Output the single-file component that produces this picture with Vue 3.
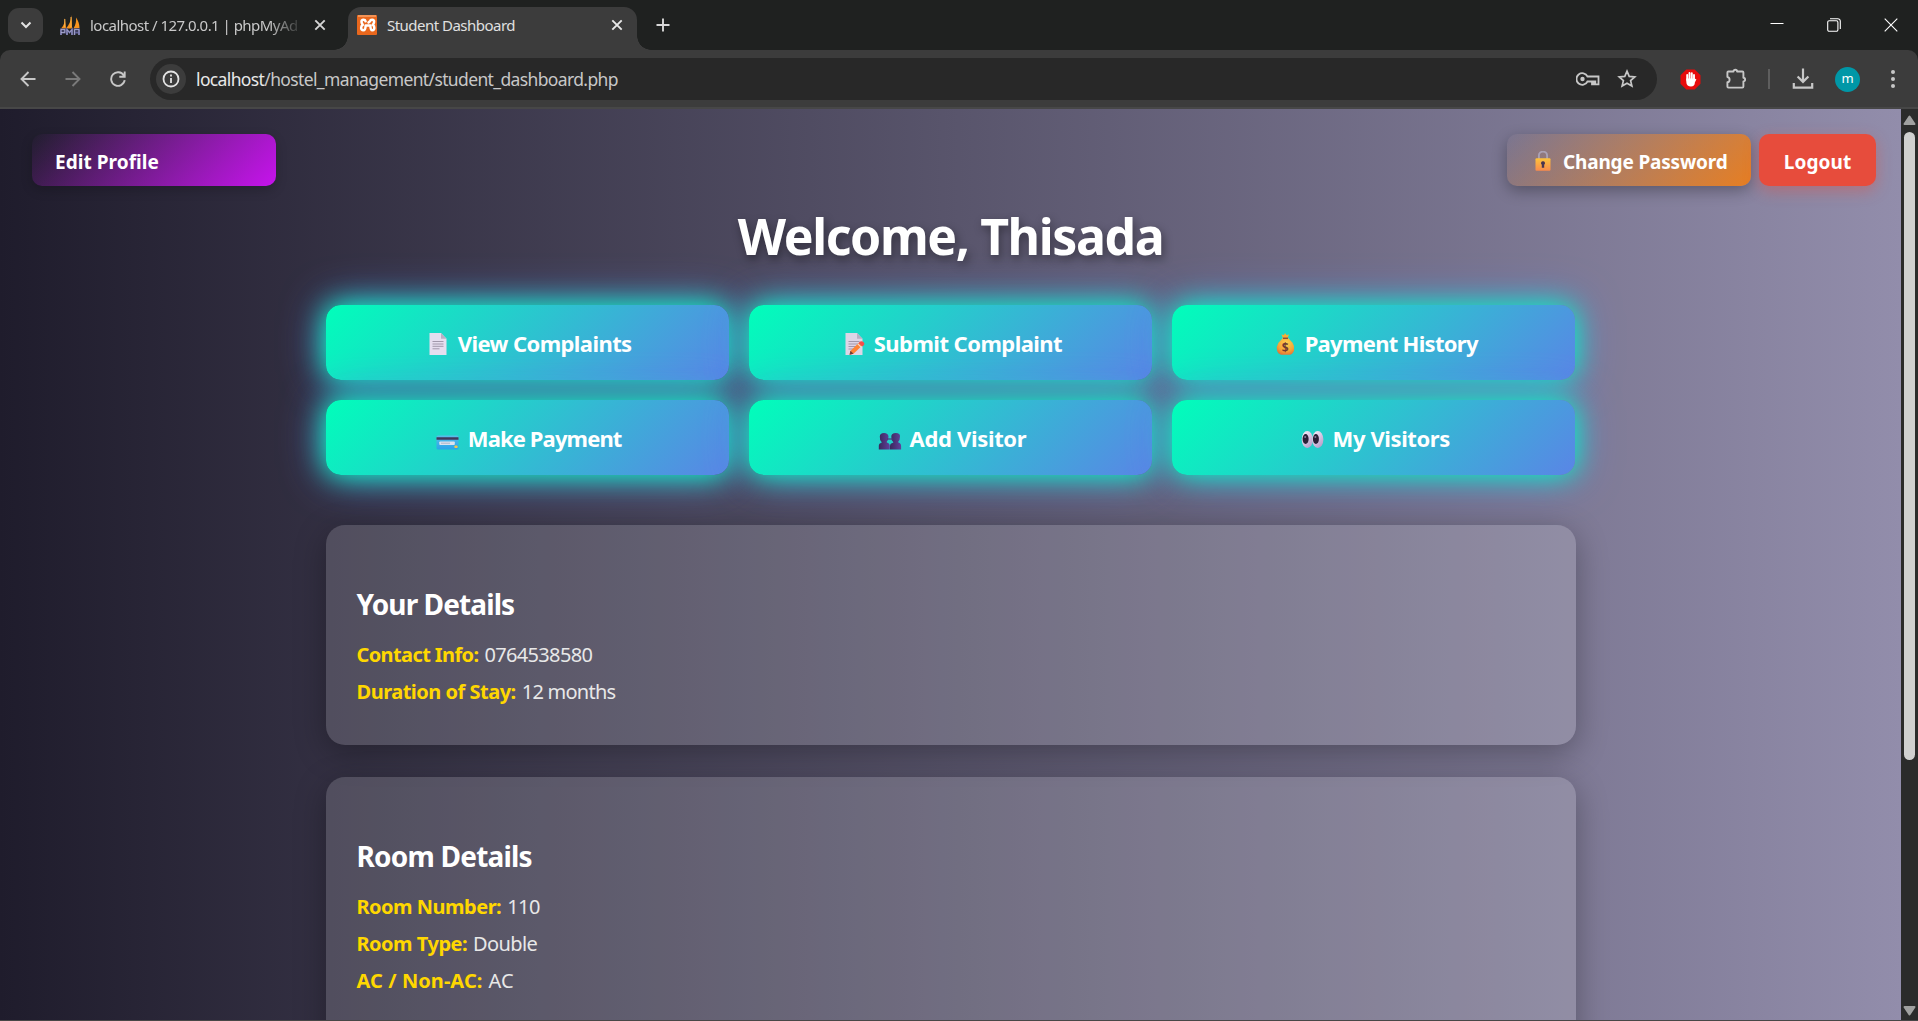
<script setup>
const actions = [
  { icon: 'page', label: 'View Complaints', spacing: -0.58 },
  { icon: 'memo', label: 'Submit Complaint', spacing: -0.54 },
  { icon: 'money', label: 'Payment History', spacing: -0.7 },
  { icon: 'card', label: 'Make Payment', spacing: -0.88 },
  { icon: 'people', label: 'Add Visitor', spacing: -0.34 },
  { icon: 'eyes', label: 'My Visitors', spacing: -0.4 }
]
const sections = [
  {
    title: 'Your Details',
    spacing: -0.9,
    rows: [
      { name: 'Contact Info:', spacing: -0.61, value: '0764538580', valueSpacing: -0.66 },
      { name: 'Duration of Stay:', spacing: -0.5, value: '12 months', valueSpacing: -0.74 }
    ]
  },
  {
    title: 'Room Details',
    spacing: -0.79,
    rows: [
      { name: 'Room Number:', spacing: -0.5, value: '110', valueSpacing: -0.6 },
      { name: 'Room Type:', spacing: -0.5, value: 'Double', valueSpacing: -0.6 },
      { name: 'AC / Non-AC:', spacing: 0.08, value: 'AC', valueSpacing: 0 }
    ]
  }
]
</script>

<template>
  <div class="window">
    <div class="tabstrip">
      <div class="tab-search">
        <svg width="12" height="8" viewBox="0 0 12 8"><path d="M1.500 1.500 6 6l4.500-4.500" fill="none" stroke="#e3e3e3" stroke-width="2" /></svg>
      </div>
      <div class="tab idle">
        <svg width="20" height="20" viewBox="0 0 20 20">
          <path d="M4.800 2.800C5 8 3.500 11 1 13.500h5zM11.500 0C11 6 9 10 6 13.500h6zM16 2.500c2 2.500 3.500 6.500 3.500 10.500l-6 .5C16 9.500 16.300 6 16 2.500z" fill="#f7931e" />
          <path d="M4.800 4v8M11 2v10" stroke="#ffb54d" stroke-width="1" />
          <path d="M1 20v-5.500h3.800v3H1M7 20v-5.500l2.500 3 2.500-3V20M14.500 20v-5.500H19V20M14.500 17.500H19" fill="none" stroke="#62629b" stroke-width="1.900" />
          <path d="M1 20v-5.500h3.800v3H1M7 20v-5.500l2.500 3 2.500-3V20M14.500 20v-5.500H19V20" fill="none" stroke="#c5c5df" stroke-width=".6" />
        </svg>
        <span class="tab-title faded">localhost / 127.0.0.1 | phpMyAd</span>
        <svg class="x" width="12" height="12" viewBox="0 0 12 12"><path d="m1.300 1.300 9.400 9.400m0-9.400-9.400 9.400" stroke="#d5d5d5" stroke-width="1.900" /></svg>
      </div>
      <div class="tab active">
        <svg width="20" height="20" viewBox="0 0 20 20">
          <rect width="20" height="20" rx="1" fill="#e9671d" />
          <path d="M1 1h18" stroke="#f6a26a" stroke-width="1.500" />
          <path d="M8.600 6.300C8 4.200 4.500 4.300 4.500 6.700c0 1.600 1 2.300 1.300 3.200C3.500 11 3.500 15.300 6.300 15.300c2.200 0 2.300-1.700 2.300-4.800h4.800c0 3.100.1 4.800 2 4.800 2.500 0 2.500-4.300.4-5.400.5-.9 1.300-1.600 1.300-3.200 0-2.400-3.600-2.500-4.100-.4L11.500 7.500" fill="none" stroke="#fff" stroke-width="2.500" stroke-linecap="round" stroke-linejoin="round" />
        </svg>
        <span class="tab-title current">Student Dashboard</span>
        <svg class="x" width="12" height="12" viewBox="0 0 12 12"><path d="m1.300 1.300 9.400 9.400m0-9.400-9.400 9.400" stroke="#e8e8e8" stroke-width="1.900" /></svg>
      </div>
      <svg class="plus" width="14" height="14" viewBox="0 0 14 14"><path d="M7 .5v13M.5 7h13" stroke="#d8d8d8" stroke-width="1.900" /></svg>
      <div class="controls">
        <svg width="14" height="14" viewBox="0 0 14 14"><path d="M.5 5.500h13" stroke="#fff" stroke-width="1" /></svg>
        <svg width="14" height="14" viewBox="0 0 14 14"><path d="M.7 4.200a1.500 1.500 0 0 1 1.500-1.500h7.200a1.500 1.500 0 0 1 1.500 1.500v7.600a1.500 1.500 0 0 1-1.500 1.500H2.200a1.500 1.500 0 0 1-1.500-1.500zM3 .7h7.800a2.500 2.500 0 0 1 2.500 2.500V11" fill="none" stroke="#fff" stroke-width="1.100" /></svg>
        <svg width="14" height="14" viewBox="0 0 14 14"><path d="m.7.700 12.600 12.600m0-12.600L.7 13.300" stroke="#fff" stroke-width="1.100" /></svg>
      </div>
    </div>

    <div class="toolbar">
      <div class="nav">
        <svg width="16" height="16" viewBox="0 0 16 16"><path d="M15.500 8H1.500M8.500 1 1.500 8l7 7" fill="none" stroke="#c7c7c7" stroke-width="1.900" /></svg>
        <svg width="16" height="16" viewBox="0 0 16 16"><path d="M.5 8h14M7.500 1l7 7-7 7" fill="none" stroke="#7a7a7a" stroke-width="1.900" /></svg>
        <svg width="16" height="16" viewBox="0 0 16 16"><path d="M14.700 9.200A6.800 6.800 0 1 1 13.800 4.500M14.700.5v5.300H9.300" fill="none" stroke="#c7c7c7" stroke-width="1.900" /></svg>
      </div>
      <div class="omnibox">
        <div class="info">
          <svg width="18" height="18" viewBox="0 0 18 18"><circle cx="9" cy="9" r="7.500" fill="none" stroke="#e3e3e3" stroke-width="1.800" /><path d="M9 8v5M9 4.600v1.900" stroke="#e3e3e3" stroke-width="1.800" /></svg>
        </div>
        <span class="url"><b>localhost</b>/hostel_management/student_dashboard.php</span>
        <svg class="key" width="24" height="14" viewBox="0 0 24 14"><path d="M11.500 4.500A5.800 5.800 0 1 0 11.500 9.500H16v2.800h1.500V9.500h1.800v2.800h3.200V4.500z" fill="none" stroke="#c7c7c7" stroke-width="1.800" /><circle cx="6.500" cy="7" r="2.200" fill="#c7c7c7" /></svg>
        <svg class="star" width="20" height="20" viewBox="0 0 20 20"><path d="m10 2.200 2.200 5.200 5.600.5-4.200 3.700 1.300 5.500L10 14.200l-4.900 2.900 1.300-5.500L2.200 7.900l5.600-.5z" fill="none" stroke="#c7c7c7" stroke-width="1.700" /></svg>
      </div>
      <div class="tools">
        <svg class="block" width="21" height="21" viewBox="0 0 21 21">
          <path d="M6.300.5h8.400l5.800 5.800v8.400l-5.800 5.800H6.300L.5 14.700V6.300z" fill="#e60b0b" />
          <path d="M7.200 11V6M9.500 10V4M11.800 10V4.300M14 11V6" stroke="#fff" stroke-width="1.900" stroke-linecap="round" />
          <path d="M6.300 9.500h8.600v3.800c0 3-1.500 4.300-3.900 4.300-2.600 0-4.700-1.600-4.700-4.600zM13.900 12l1.500-2.300 1 .5-1.900 4z" fill="#fff" />
        </svg>
        <svg class="puzzle" width="22" height="22" viewBox="0 0 22 22"><path d="M2.400 4.500a1 1 0 0 1 1-1H8.500a1.800 1.700 0 0 1 3.600 0h5.300a1 1 0 0 1 1 1v5.300a1.700 1.800 0 0 1 0 3.600v5.200a1 1 0 0 1-1 1H3.400a1 1 0 0 1-1-1v-4.300a2.700 2.700 0 0 0 0-5.300z" fill="none" stroke="#c7c7c7" stroke-width="1.900" stroke-linejoin="round" /></svg>
        <i class="divider"></i>
        <svg class="download" width="22" height="22" viewBox="0 0 22 22"><path d="M11 .5v13.300M5.600 8.500 11 13.900l5.400-5.400M1.800 15v4.600h18.400V15" fill="none" stroke="#c7c7c7" stroke-width="2.200" /></svg>
        <span class="avatar">m</span>
        <svg class="dots" width="6" height="20" viewBox="0 0 6 20"><g fill="#c7c7c7"><circle cx="3" cy="3" r="2" /><circle cx="3" cy="10" r="2" /><circle cx="3" cy="17" r="2" /></g></svg>
      </div>
    </div>

    <div class="viewport">
      <main class="page">
        <header class="topbar">
          <a class="btn edit"><span>Edit Profile</span></a>
          <a class="btn password">
            <svg width="16" height="20" viewBox="0 0 16 20">
              <defs><linearGradient id="lock" x1="0" y1="0" x2="0" y2="1"><stop stop-color="#fcc33c" /><stop offset="1" stop-color="#f98a4c" /></linearGradient></defs>
              <path d="M3.900 9V4.600a4.100 4 0 0 1 8.200 0V9" fill="none" stroke="#aaa1b4" stroke-width="1.900" />
              <rect x=".5" y="7.200" width="15" height="12.600" rx="1" fill="url(#lock)" />
              <path d="M8 10.200a2 2 0 0 1 1.200 3.600v3H6.800v-3A2 2 0 0 1 8 10.200z" fill="#4a3550" />
            </svg>
            <span>Change Password</span>
          </a>
          <a class="btn logout"><span>Logout</span></a>
        </header>

        <h1><span>Welcome, Thisada</span></h1>

        <nav class="actions">
          <a v-for="a in actions" :key="a.label" class="action">
            <svg v-if="a.icon === 'page'" class="glyph" width="28" height="24" viewBox="0 0 28 24">
              <path d="M5.500 1H17l5.500 5.800V23h-17z" fill="#e5deef" /><path d="M17 1v5.800h5.500z" fill="#b9b0c4" />
              <path d="M8.500 9.500h11M8.500 12h11M8.500 14.300h11M8.500 16.800h7" stroke="#a198ab" stroke-width="1" />
            </svg>
            <svg v-else-if="a.icon === 'memo'" class="glyph" width="28" height="24" viewBox="0 0 28 24">
              <path d="M5.500 1H17l5.500 5.800V23h-17z" fill="#ddd5e6" /><path d="M17 1v5.800h5.500z" fill="#b9b0c4" />
              <path d="M8.500 9.500h11M8.500 12h10M8.500 14.500h8M8.500 17h6" stroke="#a198ab" stroke-width="1" />
              <path d="m9.500 22.800 1-4 9-8.500 3 3-9 8.500z" fill="#ff8435" /><path d="m18.700 11 1.500-1.500q2-1 3.500.8t0 3l-1.300 1.300z" fill="#f44d4b" /><path d="m9.500 22.800 1-4 3 3z" fill="#713d3a" /><path d="m17.800 11.900 3.500 3.500" stroke="#f5d9c6" stroke-width="1.200" />
            </svg>
            <svg v-else-if="a.icon === 'money'" class="glyph" width="28" height="24" viewBox="0 0 28 24">
              <defs><radialGradient id="bag" cx=".55" cy=".3" r=".8"><stop stop-color="#ffd04d" /><stop offset=".6" stop-color="#f4a638" /><stop offset="1" stop-color="#df6737" /></radialGradient></defs>
              <path d="M10.500 2.500 13 3l1-2 1.500 2 2.500-.5-1.500 4h-4.500z" fill="#f6ae36" /><path d="M12 5.800h5l4.500 5q2.500 3.700 1.500 7.500t-4 4.400h-9q-3-.7-4-4.400T7.500 10.800z" fill="url(#bag)" /><path d="M12 6.300h5" stroke="#8f4b39" stroke-width="1.500" />
              <text x="14.300" y="19.500" text-anchor="middle" class="coin">$</text>
            </svg>
            <svg v-else-if="a.icon === 'card'" class="glyph" width="28" height="24" viewBox="0 0 28 24">
              <defs><linearGradient id="bank" x1="0" y1="0" x2="0" y2="1"><stop stop-color="#58bee9" /><stop offset="1" stop-color="#2aa4e8" /></linearGradient></defs>
              <rect x="2.500" y="8.500" width="22" height="14" rx="1.500" fill="url(#bank)" /><path d="M2.500 11.500h22" stroke="#40395b" stroke-width="2.500" /><rect x="5.300" y="14.500" width="15.500" height="3.500" rx=".8" fill="#dce3ef" /><path d="M7 16.200h9" stroke="#adb6c7" stroke-width="1" /><rect x="20.500" y="18.500" width="3" height="2.600" rx=".7" fill="#f2c94a" />
            </svg>
            <svg v-else-if="a.icon === 'people'" class="glyph" width="28" height="24" viewBox="0 0 28 24">
              <defs><linearGradient id="duo"><stop stop-color="#39295c" /><stop offset="1" stop-color="#61409b" /></linearGradient></defs>
              <g fill="url(#duo)"><path d="M3.800 9.500q0-3.500 4.200-3.500t4.500 3.500q0 3.500-1.700 5v1q3 .7 3 3.500v3.500h-11V19q0-2.800 2.800-3.300V15Q3.500 13 3.800 9.500z" /><path d="M15.300 9.500q0-3.500 4.500-3.500t4.200 3.500q0 3.500-1.700 5v1q2.800.7 2.800 3.500v3.500H14V19q0-2.800 3.200-3.300V15q-2.200-2-1.900-5.500z" /></g><path d="M11 12h6" stroke="#4b347b" stroke-width="1.200" />
            </svg>
            <svg v-else class="glyph" width="28" height="24" viewBox="0 0 28 24">
              <defs><linearGradient id="eye" x1="0" y1="0" x2=".7" y2="1"><stop stop-color="#fbf4ff" /><stop offset="1" stop-color="#b79fca" /></linearGradient></defs>
              <ellipse cx="8.300" cy="12.500" rx="5.600" ry="8.500" fill="url(#eye)" /><ellipse cx="18.800" cy="12.500" rx="5.600" ry="8.500" fill="url(#eye)" /><ellipse cx="6.600" cy="12" rx="3" ry="5" fill="#2b2037" /><ellipse cx="16.900" cy="12" rx="3" ry="5" fill="#2b2037" /><circle cx="6.200" cy="10" r="1" fill="#8a7b99" /><circle cx="16.400" cy="10" r="1" fill="#8a7b99" />
            </svg>
            <span :style="{ letterSpacing: a.spacing + 'px' }">{{ a.label }}</span>
          </a>
        </nav>

        <section v-for="s in sections" :key="s.title" class="details">
          <h2 :style="{ letterSpacing: s.spacing + 'px' }">{{ s.title }}</h2>
          <p v-for="r in s.rows" :key="r.name">
            <strong :style="{ letterSpacing: r.spacing + 'px' }">{{ r.name }}</strong>
            <span :style="{ letterSpacing: r.valueSpacing + 'px' }">{{ r.value }}</span>
          </p>
        </section>
      </main>
      <div class="scrollbar">
        <svg width="13" height="11" viewBox="0 0 13 11"><path d="M6.500 1.500 11.500 9h-10z" fill="#a0a0a0" stroke="#a0a0a0" stroke-width="2" stroke-linejoin="round" /></svg>
        <div class="thumb"></div>
        <svg width="13" height="11" viewBox="0 0 13 11"><path d="M6.500 9.500 1.500 2h10z" fill="#a0a0a0" stroke="#a0a0a0" stroke-width="2" stroke-linejoin="round" /></svg>
      </div>
    </div>
  </div>
</template>

<style>
body { margin: 0; overflow: hidden; }
</style>

<style scoped>
* { box-sizing: border-box; }
svg { display: block; flex: none; }
.window { width: 1918px; height: 1021px; display: flex; flex-direction: column; overflow: hidden; background: #1f2120; font-family: "Noto Sans", "Open Sans", sans-serif; }

.tabstrip { flex: none; height: 50px; display: flex; padding-left: 8px; }
.tab-search { width: 35px; height: 34px; margin-top: 8px; border-radius: 11px; background: #3c3c3c; display: flex; align-items: center; justify-content: center; }
.tab { display: flex; align-items: center; font-size: 15px; }
.idle { width: 305px; padding: 0 22px 0 17px; color: #c9c9c9; }
.tab-title { flex: 1; margin-left: 10px; white-space: nowrap; line-height: 26px; letter-spacing: -0.52px; }
.faded { letter-spacing: -0.53px; -webkit-mask-image: linear-gradient(to right, #000 178px, transparent 214px); mask-image: linear-gradient(to right, #000 178px, transparent 214px); }
.active { position: relative; width: 289px; height: 43px; margin-top: 7px; padding: 0 14px 7px 9px; border-radius: 13px 13px 0 0; background: #3c3c3c; color: #e0e0e0; }
.active::before, .active::after { content: ""; position: absolute; bottom: 0; width: 14px; height: 14px; }
.active::before { left: -14px; background: radial-gradient(circle at 0 0, transparent 13.500px, #3c3c3c 14px); }
.active::after { right: -14px; background: radial-gradient(circle at 100% 0, transparent 13.500px, #3c3c3c 14px); }
.plus { margin: 18px 0 0 19px; }
.controls { margin-left: auto; display: flex; gap: 43px; padding: 18px 20px 0 0; }

.toolbar { flex: none; height: 59px; display: flex; padding-top: 8px; background: #3c3c3c; border-bottom: 2px solid #474747; border-radius: 10px 10px 0 0; }
.nav { width: 150px; height: 42px; padding-left: 20px; display: flex; align-items: center; gap: 29px; }
.omnibox { width: 1507px; height: 42px; border-radius: 21px; background: #282828; display: flex; align-items: center; padding-left: 6px; }
.info { width: 30px; height: 30px; border-radius: 50%; background: #3c3c3c; display: flex; align-items: center; justify-content: center; }
.url { margin-left: 10px; flex: 1; color: #c7c7c7; font-size: 17.500px; line-height: 30px; letter-spacing: -0.63px; white-space: nowrap; }
.url b { font-weight: 400; color: #e8e8e8; }
.star { margin: 0 20px 0 17px; }
.tools { flex: 1; height: 42px; display: flex; align-items: center; padding-left: 23px; }
.puzzle { margin-left: 24px; }
.divider { width: 2px; height: 20px; margin-left: 21px; background: #5e5e5e; }
.download { margin-left: 22px; }
.avatar { width: 25px; height: 25px; margin-left: 21px; border-radius: 50%; background: #0097a7; color: #fff; font-size: 13px; line-height: 23px; text-align: center; }
.dots { margin-left: 30px; }

.viewport { height: 912px; display: flex; border-bottom: 1px solid #474747; }
.page { width: 1901px; height: 911px; overflow: hidden; padding-top: 25px; background: linear-gradient(to right, #1f1c2c, #928dab); color: #fff; }
.topbar { display: flex; height: 52px; padding: 0 25px 0 32px; }
.btn { height: 52px; border-radius: 10px; display: flex; align-items: center; font-size: 19px; font-weight: 700; white-space: nowrap; }
.btn span { position: relative; top: 2px; }
.edit { width: 244px; padding-left: 23px; letter-spacing: 0.05px; background: linear-gradient(135deg, transparent, #c613ec); box-shadow: 0 4px 12px rgba(0, 0, 0, .2); }
.password { width: 244px; margin-left: auto; padding-left: 28px; gap: 12px; letter-spacing: -0.17px; background: linear-gradient(135deg, transparent, #e67e22); box-shadow: 0 5px 15px rgba(0, 0, 0, .3); }
.password svg { position: relative; top: 1px; }
.logout { width: 117px; margin-left: 8px; justify-content: center; letter-spacing: 0.08px; background: #e74c3c; box-shadow: 0 5px 15px rgba(231, 76, 60, .4); }

h1 { height: 70px; margin: 15px 0 34px; text-align: center; font-size: 50px; line-height: 70px; letter-spacing: -1.400px; text-shadow: 2px 4px 10px rgba(0, 0, 0, .4); }
.actions { width: 1250px; margin: 0 auto 50px; display: grid; grid-template-columns: repeat(3, 403.300px); grid-auto-rows: 75px; gap: 20px; }
.action { border-radius: 15px; display: flex; align-items: center; justify-content: center; gap: 7px; font-size: 22px; font-weight: 700; background: linear-gradient(135deg, #00ffba, #5a85e6); box-shadow: 0 0 28px #00ffba, 0 0 44px #5a85e6; }
.action .glyph { position: relative; top: 1px; left: 1px; }
.coin { font: 700 12px "Noto Sans", sans-serif; fill: #713b32; }

.details { position: relative; width: 1250px; height: 220px; margin: 0 auto 32px; padding: 59px 31px 0; border-radius: 19px; background: rgba(255, 255, 255, .15); box-shadow: 0 8px 32px rgba(0, 0, 0, .3); }
.details:last-child { height: 280px; }
h2 { margin: 0 0 12px; font-size: 28px; line-height: 40px; }
p { margin: 0; display: flex; gap: 6px; font-size: 20px; line-height: 37px; color: #e8e8e8; }
strong { color: #ffd700; }

.scrollbar { width: 17px; height: 911px; background: #2b2b2b; display: flex; flex-direction: column; align-items: center; padding: 6px 0 4px; }
.thumb { width: 11px; height: 628px; margin: 6px 0 auto; border-radius: 6px; background: #d0d0d0; }
</style>
